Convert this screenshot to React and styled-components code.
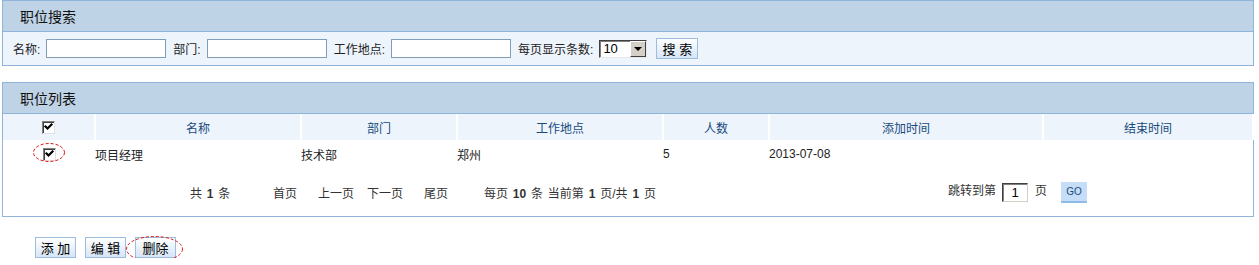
import styled, { createGlobalStyle } from 'styled-components';

const GlobalStyle = createGlobalStyle`
  html, body {
    margin: 0;
    padding: 0;
    background: #ffffff;
  }
  body {
    font-family: "Liberation Sans", "Noto Sans CJK SC", sans-serif;
    font-size: 12px;
    color: #222;
  }
`;

const Page = styled.div`
  padding: 0 0 0 2px;
  width: 1252px;
`;

const Panel = styled.section`
  border: 1px solid #8fb4da;
  margin-bottom: ${(p) => p.$mb || 0}px;
`;

const PanelHeader = styled.div`
  height: 30px;
  display: flex;
  align-items: center;
  padding-left: 17px;
  background: #bfd3e7;
  border-bottom: 1px solid #8fb4da;
  font-size: 14px;
  color: #111;
`;

const SearchBar = styled.div`
  height: 33px;
  display: flex;
  align-items: center;
  padding-left: 10px;
  background: #eef4fc;
`;

const Label = styled.span`
  margin-right: 6px;
  white-space: nowrap;
`;

const TextInput = styled.input`
  box-sizing: border-box;
  width: 120px;
  height: 19px;
  border: 1px solid #7f9db9;
  background: #fff;
  margin: 0 7px 0 0;
  padding: 0 2px;
  font: inherit;
`;

const Select = styled.div`
  box-sizing: border-box;
  width: 48px;
  height: 18px;
  display: flex;
  background: #fff;
  border-top: 1px solid #404040;
  border-left: 1px solid #404040;
  border-right: 1px solid #e8e8e8;
  border-bottom: 1px solid #e8e8e8;
  box-shadow: inset 1px 1px 0 #808080;
  margin-right: 9px;
`;

const SelectValue = styled.span`
  flex: 1;
  padding-left: 3px;
  line-height: 16px;
  font-size: 13px;
  color: #000;
`;

const SelectArrow = styled.span`
  width: 16px;
  background: #d4d0c8;
  border-top: 1px solid #fff;
  border-left: 1px solid #fff;
  border-right: 1px solid #404040;
  border-bottom: 1px solid #404040;
  box-sizing: border-box;
  display: flex;
  align-items: center;
  justify-content: center;
  &::after {
    content: '';
    border-left: 4px solid transparent;
    border-right: 4px solid transparent;
    border-top: 4px solid #000;
  }
`;

const Button = styled.button`
  box-sizing: border-box;
  height: 21px;
  width: ${(p) => p.$w || 42}px;
  padding: 0;
  border: 1px solid #9dbddf;
  background: linear-gradient(#ffffff, #d6e5f6);
  font-family: "Liberation Sans", "Noto Sans CJK SC", sans-serif;
  font-size: 13px;
  color: #000;
  cursor: pointer;
  margin-right: ${(p) => p.$mr || 0}px;
`;

const Table = styled.table`
  width: 100%;
  border-collapse: collapse;
  table-layout: fixed;
`;

const Th = styled.th`
  height: 26px;
  padding: 0;
  font-weight: normal;
  color: #174b7d;
  background: #eef4fc;
  border-right: 2px solid #fff;
  text-align: center;
`;

const Td = styled.td`
  height: 28px;
  padding: 0;
  text-align: ${(p) => (p.$center ? 'center' : 'left')};
  color: #222;
`;

const CheckWrap = styled.span`
  position: relative;
  display: inline-block;
  vertical-align: middle;
`;

const Check = styled.span`
  box-sizing: border-box;
  display: block;
  width: 13px;
  height: 13px;
  background: #fff;
  border-top: 1px solid #808080;
  border-left: 1px solid #808080;
  border-right: 1px solid #e0e0e0;
  border-bottom: 1px solid #e0e0e0;
  box-shadow: inset 1px 1px 0 #404040;
  svg {
    display: block;
  }
`;

const Ring = styled.svg`
  position: absolute;
  left: ${(p) => p.$l}px;
  top: ${(p) => p.$t}px;
  pointer-events: none;
  overflow: visible;
`;

const Pager = styled.div`
  height: 48px;
  display: flex;
  align-items: center;
  padding-left: 187px;
  color: #333;
  word-spacing: 1.5px;
`;

const PagerItem = styled.span`
  width: ${(p) => p.$w}px;
  flex: none;
  white-space: nowrap;
  b {
    font-weight: bold;
  }
`;

const JumpInput = styled.span`
  box-sizing: border-box;
  display: inline-flex;
  align-items: center;
  justify-content: center;
  width: 26px;
  height: 19px;
  margin: 0 7px 0 6px;
  border-top: 1px solid #404040;
  border-left: 1px solid #404040;
  border-right: 1px solid #d4d0c8;
  border-bottom: 1px solid #d4d0c8;
  box-shadow: inset 1px 1px 0 #808080;
  font-size: 13px;
  color: #000;
  vertical-align: middle;
`;

const GoButton = styled.span`
  box-sizing: border-box;
  display: inline-flex;
  align-items: center;
  justify-content: center;
  width: 26px;
  height: 21px;
  margin-left: 14px;
  background: #c6ddf8;
  border-bottom: 2px solid #8ebbea;
  font-size: 10px;
  color: #1a4b7d;
  vertical-align: middle;
`;

const Actions = styled.div`
  display: flex;
  align-items: center;
  padding: 20px 0 0 33px;
`;

const columns = [
  { title: '', w: 92 },
  { title: '名称', w: 206 },
  { title: '部门', w: 156 },
  { title: '工作地点', w: 206 },
  { title: '人数', w: 106 },
  { title: '添加时间', w: 274 },
  { title: '结束时间', w: 210 },
];

function CheckBox() {
  return (
    <Check>
      <svg width="11" height="11" viewBox="0 0 11 11">
        <path
          d="M2.5 4.5 L4.5 6.5 L8.5 2.5"
          fill="none"
          stroke="#000"
          strokeWidth="2.2"
          strokeLinecap="square"
        />
      </svg>
    </Check>
  );
}

function DashedRing({ w, h, l, t }) {
  return (
    <Ring width={w} height={h} $l={l} $t={t}>
      <ellipse
        cx={w / 2}
        cy={h / 2}
        rx={w / 2 - 0.5}
        ry={h / 2 - 0.5}
        fill="none"
        stroke="#e01010"
        strokeWidth="1"
        strokeDasharray="3 2"
      />
    </Ring>
  );
}

export default function App() {
  return (
    <>
      <GlobalStyle />
      <Page>
        <Panel $mb={16}>
          <PanelHeader>职位搜索</PanelHeader>
          <SearchBar>
            <Label>名称:</Label>
            <TextInput />
            <Label>部门:</Label>
            <TextInput />
            <Label>工作地点:</Label>
            <TextInput />
            <Label>每页显示条数:</Label>
            <Select>
              <SelectValue>10</SelectValue>
              <SelectArrow />
            </Select>
            <Button>搜 索</Button>
          </SearchBar>
        </Panel>

        <Panel>
          <PanelHeader>职位列表</PanelHeader>
          <Table>
            <colgroup>
              {columns.map((c, i) => (
                <col key={i} style={{ width: c.w }} />
              ))}
            </colgroup>
            <thead>
              <tr>
                {columns.map((c, i) => (
                  <Th key={i}>
                    {i === 0 ? (
                      <CheckWrap>
                        <CheckBox />
                      </CheckWrap>
                    ) : (
                      c.title
                    )}
                  </Th>
                ))}
              </tr>
            </thead>
            <tbody>
              <tr>
                <Td $center>
                  <CheckWrap>
                    <CheckBox />
                    <DashedRing w={32} h={19} l={-10} t={-5} />
                  </CheckWrap>
                </Td>
                <Td>项目经理</Td>
                <Td>技术部</Td>
                <Td>郑州</Td>
                <Td>5</Td>
                <Td>2013-07-08</Td>
                <Td></Td>
              </tr>
            </tbody>
          </Table>
          <Pager>
            <PagerItem $w={83}>
              共 <b>1</b> 条
            </PagerItem>
            <PagerItem $w={45}>首页</PagerItem>
            <PagerItem $w={49}>上一页</PagerItem>
            <PagerItem $w={57}>下一页</PagerItem>
            <PagerItem $w={60}>尾页</PagerItem>
            <PagerItem $w={464}>
              每页 <b>10</b> 条 当前第 <b>1</b> 页/共 <b>1</b> 页
            </PagerItem>
            <PagerItem $w={200}>
              跳转到第
              <JumpInput>1</JumpInput>页
              <GoButton>GO</GoButton>
            </PagerItem>
          </Pager>
        </Panel>

        <Actions>
          <Button $w={41} $mr={9}>添 加</Button>
          <Button $w={41} $mr={9}>编 辑</Button>
          <CheckWrap>
            <Button $w={41}>删除</Button>
            <DashedRing w={57} h={26} l={-9} t={-1} />
          </CheckWrap>
        </Actions>
      </Page>
    </>
  );
}
